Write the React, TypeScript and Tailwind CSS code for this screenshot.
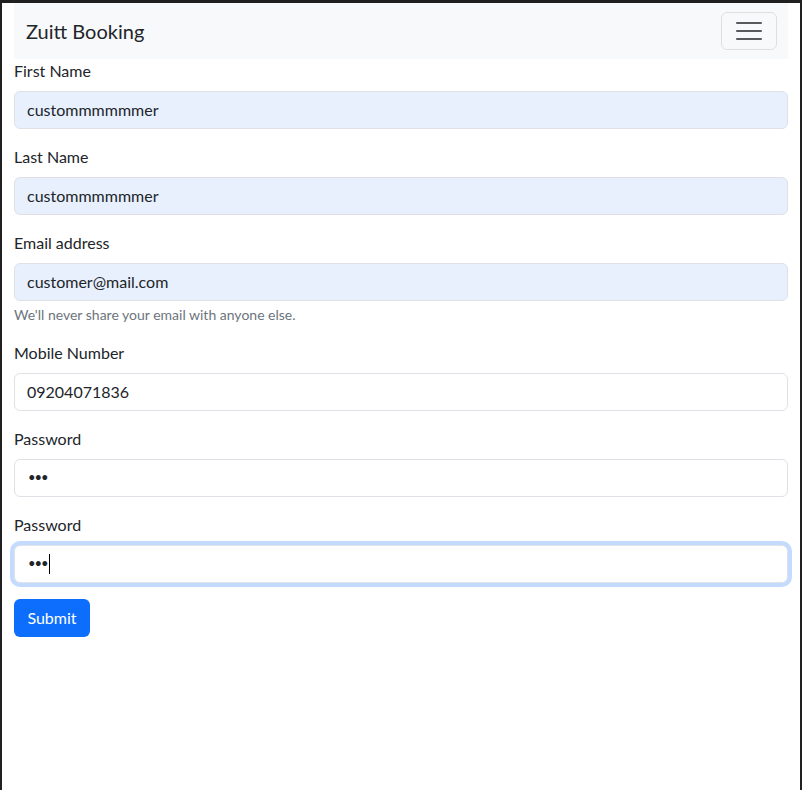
import React from "react";

const font = { fontFamily: 'Lato, "Noto Sans", "Liberation Sans", sans-serif' };

function Field({ label, value, filled, focused, password, help }: { label: string; value: string; filled?: boolean; focused?: boolean; password?: boolean; help?: string }) {
  return (
    <div className="mb-4">
      <div className="mb-2 text-[16px] leading-[24px] text-[#212529]">{label}</div>
      <div
        className={
          "flex h-[38px] items-center rounded-[6px] border px-[12px] text-[16px] text-[#212529] " +
          (filled ? "bg-[#e8f0fe] border-[#dee2e6] " : "bg-white border-[#dee2e6] ") +
          (focused ? "border-[#86b7fe] shadow-[0_0_0_4px_rgba(13,110,253,0.25)]" : "")
        }
      >
        {password ? (
          <span className="flex items-center pl-[1px]">
            <span className="text-[13px] tracking-[-1px]">•••</span>
            {focused && <span className="ml-[1px] inline-block h-[20px] w-[1px] bg-black" />}
          </span>
        ) : (
          <span>{value}</span>
        )}
      </div>
      {help && <div className="mt-1 text-[14px] leading-[20px] text-[#6c757d]">{help}</div>}
    </div>
  );
}

export default function App() {
  return (
    <div className="h-[790px] w-[802px] border-x-2 border-t-[3px] border-[#202020] bg-white" style={font}>
      <div className="px-[12px]">
        <nav className="flex h-[56px] items-center justify-between bg-[#f8f9fa] px-[12px]">
          <span className="text-[20px] text-[#212529]">Zuitt Booking</span>
          <button className="flex h-[38px] w-[56px] translate-x-[1px] items-center justify-center rounded-[6px] border border-[rgba(0,0,0,0.1)]">
            <svg width="30" height="30" viewBox="0 0 30 30">
              <path d="M3 7h24M3 15h24M3 23h24" stroke="rgba(33,37,41,0.75)" strokeWidth="2" strokeLinecap="round" />
            </svg>
          </button>
        </nav>
        <Field label="First Name" value="custommmmmmer" filled />
        <Field label="Last Name" value="custommmmmmer" filled />
        <Field label="Email address" value="customer@mail.com" filled help="We'll never share your email with anyone else." />
        <Field label="Mobile Number" value="09204071836" />
        <Field label="Password" value="" password />
        <Field label="Password" value="" password focused />
        <button className="h-[38px] w-[76px] rounded-[6px] bg-[#0d6efd] text-[16px] text-white">Submit</button>
      </div>
    </div>
  );
}
